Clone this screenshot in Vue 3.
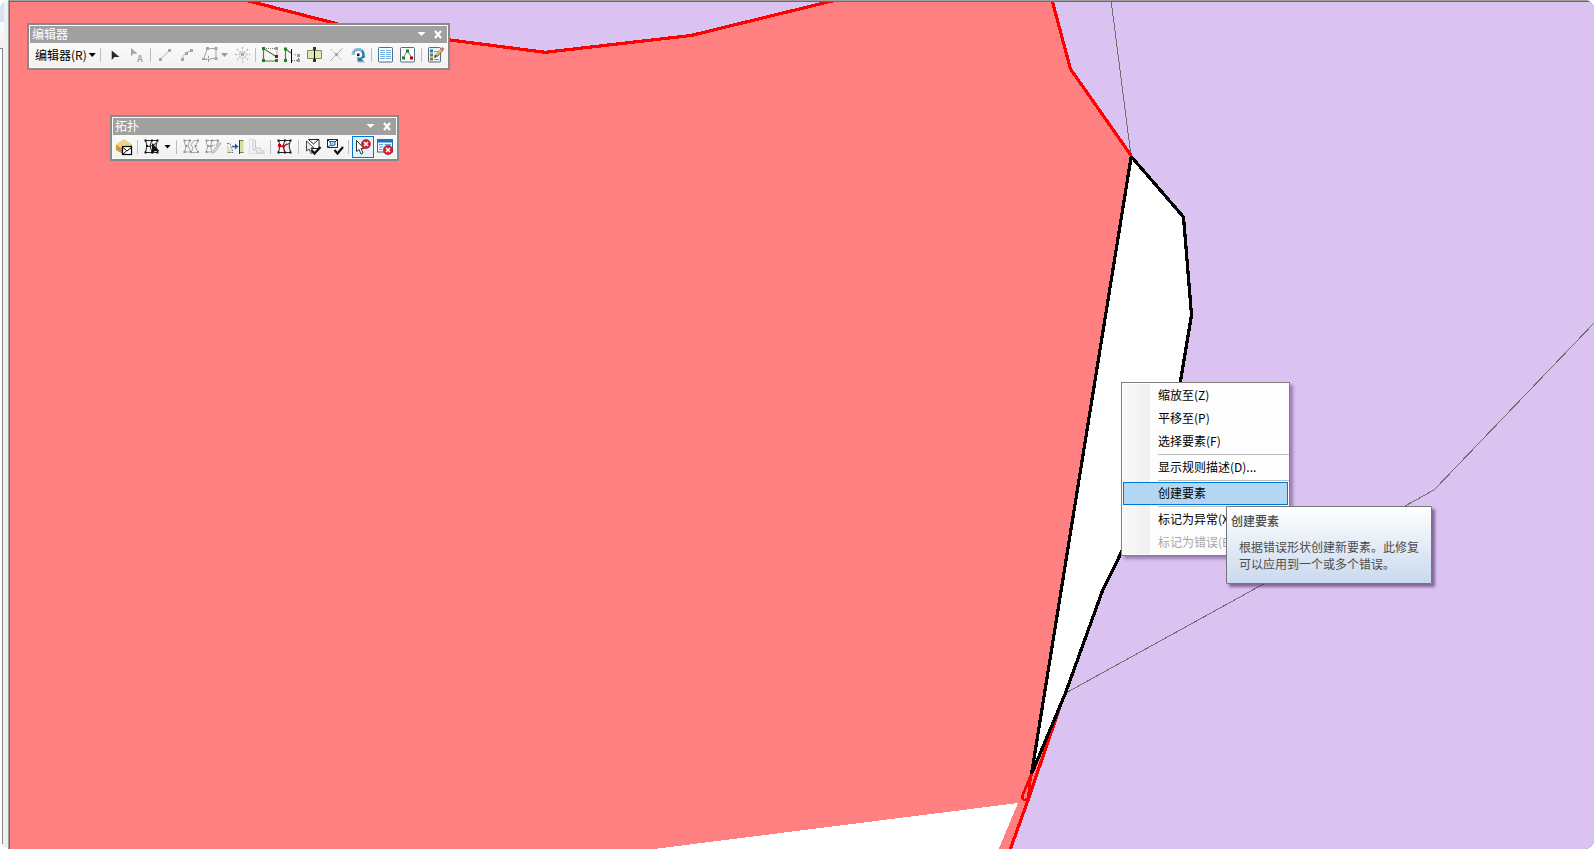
<template>
    <div class="app-window">
        <div class="side-strip">
            <div class="side-top"></div>
            <div class="side-middle"></div>
            <div class="side-panel"></div>
        </div>

        <main class="map-view">
            <!-- 地图图层 -->
            <svg class="map-canvas" viewBox="10 2 1584 847" shape-rendering="crispEdges">
                <rect x="10" y="2" width="1584" height="847" fill="#dac2f1" />
                <polygon class="land" :points="landPoints" />
                <polygon class="blank" points="650,849.5 1018,803 998.5,849.5" />
                <polyline class="boundary" points="1111,0 1131,156" />
                <polyline class="boundary" points="1596,321 1434,490 1064,694" />
                <polyline class="edge" points="243,-0.5 365,31 450,40 545,52.3 691,35.5 836,0" />
                <polyline class="edge" points="1052,0 1070.5,69 1131.5,156" />
                <polyline class="edge" points="1064,695 1028,800 1010,850" />
                <polyline class="edge thin" points="1032,772 1022,797 1024,800 1028,799 1030,782 1032,772" />
                <polygon class="gap-shape" :points="gapPoints" />
            </svg>

            <!-- 编辑器工具条 -->
            <section class="toolbar editor-bar">
                <header class="toolbar-title">
                    <span class="title-text">编辑器</span>
                    <svg class="title-icons" width="32" height="17" viewBox="0 0 32 17">
                        <path d="M2.5 6h8l-4 4z" fill="#fff" />
                        <path d="M20 5l6 7M26 5l-6 7" stroke="#fff" stroke-width="2.2" />
                    </svg>
                </header>
                <div class="toolbar-body">
                    <button class="menu-button"><span class="menu-label">编辑器(R)</span><i class="caret"></i></button>
                    <i class="divider"></i>
                    <svg class="tool" viewBox="0 0 22 22">
                        <path d="M7.7 6.5v9.5l2.8-3h5z" fill="#222a30" />
                    </svg>
                    <svg class="tool" viewBox="0 0 22 22">
                        <path d="M5 4v8.500l2.400-2.800H11.500z" fill="#a6a6a6" />
                        <text x="11" y="18" font-size="9" font-weight="bold" fill="#a6a6a6">A</text>
                    </svg>
                    <i class="divider"></i>
                    <svg class="tool" viewBox="0 0 22 22">
                        <path d="M6 15.5L15.5 6.5" stroke="#b4b4b4" />
                        <path d="M5 14h3v3H5zM14 5h3v3h-3z" fill="#a6a6a6" />
                    </svg>
                    <svg class="tool" viewBox="0 0 22 22">
                        <path d="M6.5 15.5Q6.5 9 15 6.5" fill="none" stroke="#b4b4b4" />
                        <path d="M5 14h3v3H5zM9 8h3v3H9zM14 5h3v3h-3z" fill="#a6a6a6" />
                    </svg>
                    <svg class="tool" viewBox="0 0 22 22">
                        <path d="M13 14.5h5v-10H9.5l-4 10.5h3" fill="none" stroke="#a6a6a6" />
                        <path d="M8 3h3v3H8zM16.5 3h3v3h-3zM16.5 13h3v3h-3zM4 14h3v2H4z" fill="#a6a6a6" />
                        <path d="M10.5 12v7M7 15.5h7" stroke="#999" stroke-dasharray="2.5 1" />
                    </svg>
                    <i class="caret after-tool muted"></i>
                    <svg class="tool" viewBox="0 0 22 22" stroke="#bbb" stroke-width="1.5">
                        <path d="M11.5 3v15.5M4 10.500h15M6 5l11 11M17 5L6 16" stroke-dasharray="2 1.5" />
                        <path d="M10 9h3v3h-3z" fill="#aaa" stroke="none" />
                    </svg>
                    <i class="divider"></i>
                    <svg class="tool" viewBox="0 0 22 22">
                        <path d="M5 4.5h13v7" fill="none" stroke="#777" stroke-dasharray="1 1" />
                        <path d="M17 12.5L4.5 4.5v12.5h13" fill="none" stroke="#55803a" stroke-width="1.2" />
                        <path d="M3 3h3v3H3zM3 15h3v3H3zM16 15h3v3h-3z" fill="#118a11" />
                        <path d="M16 3h3v3h-3z" fill="#999" />
                        <path d="M16 11h3v3h-3z" fill="#b30000" />
                    </svg>
                    <svg class="tool" viewBox="0 0 22 22">
                        <path d="M17.5 17v-5.5l-5-1M11 16.5h6" fill="none" stroke="#777" stroke-dasharray="1 1" />
                        <path d="M10 9L4.5 5v12" fill="none" stroke="#55803a" stroke-width="1.2" />
                        <path d="M3 3.5h3v3H3zM3 15h3v3H3z" fill="#118a11" />
                        <path d="M16 10h3v3h-3zM16 15h3v3h-3z" fill="#999" />
                        <path d="M10.5 5v14" stroke="#000" />
                    </svg>
                    <svg class="tool" viewBox="0 0 22 22">
                        <path d="M4.5 6.5h14v8h-14z" fill="#dfe9ae" stroke="#7d8c5a" />
                        <path d="M11.5 3v15" stroke="#000" />
                        <path d="M10 3h3v3h-3zM10 15h3v3h-3z" fill="#333" />
                    </svg>
                    <svg class="tool" viewBox="0 0 22 22">
                        <path d="M5 17L17.5 4.5" stroke="#aaa" />
                        <path d="M5.5 5l11 11" stroke="#b5b5b5" stroke-dasharray="3 1" />
                        <path d="M10 9h3v3h-3z" fill="#a6a6a6" />
                    </svg>
                    <svg class="tool" viewBox="0 0 22 22">
                        <path d="M6 10.5C6 4 16.5 3 16.5 11v3" fill="none" stroke="#2b7fae" stroke-width="2.6" />
                        <path d="M5.5 10.500C6 4.500 12 3.500 15 6.500" fill="none" stroke="#8fc5e3" stroke-width="1.8" />
                        <path d="M10.5 12.5v5h7z" fill="#2577a5" />
                        <path d="M12.500 16l4.500-4" stroke="#2577a5" stroke-width="2" />
                        <path d="M10 9.5h2.5V12H10z" fill="#222" />
                        <path d="M11 18.5h7" stroke="#ccc" />
                    </svg>
                    <i class="divider"></i>
                    <svg class="tool" viewBox="0 0 22 22">
                        <rect x="3.5" y="3.5" width="14" height="14.5" rx="1" fill="#fff" stroke="#536b80" />
                        <path d="M5 6.5h5M11 6.5h5M5 8.5h5M11 8.5h5M5 10.5h5M11 10.5h5M5 12.5h5M11 12.5h5M5 14.5h5M11 14.5h5" stroke="#73afe3" />
                    </svg>
                    <svg class="tool" viewBox="0 0 22 22">
                        <rect x="3.5" y="3.5" width="14" height="14.5" rx="1" fill="#fff" stroke="#536b80" />
                        <path d="M6 14l4.5-7 4.5 7" fill="none" stroke="#777" />
                        <path d="M9 5.5h3v3H9zM5 12.5h3v3H5z" fill="#118a11" />
                        <path d="M13 12.5h3v3h-3z" fill="#b3000f" />
                    </svg>
                    <i class="divider"></i>
                    <svg class="tool" viewBox="0 0 22 22">
                        <rect x="3.5" y="3.5" width="12" height="14.5" rx="1" fill="#e7f4fc" stroke="#536b80" />
                        <path d="M9 7.5h5M9 11.5h5M9 15.5h5" stroke="#68a4d0" />
                        <path d="M5 5.5h3v3H5z" fill="#3f75a2" />
                        <path d="M5 9.5h3v3H5z" fill="#5f8b43" />
                        <path d="M5 13.5h3v3H5z" fill="#a5712c" />
                        <path d="M11 12l6.5-6.5" stroke="#8a6a3a" stroke-width="3" />
                        <path d="M11 11.500l6-6" stroke="#f0bd6a" stroke-width="1.8" />
                        <path d="M16.500 6L18.5 4" stroke="#d9707a" stroke-width="3" />
                        <path d="M9.5 13.500l2-2" stroke="#333" stroke-width="1.5" />
                    </svg>
                </div>
            </section>

            <!-- 拓扑工具条 -->
            <section class="toolbar topology-bar">
                <header class="toolbar-title">
                    <span class="title-text">拓扑</span>
                    <svg class="title-icons" width="32" height="17" viewBox="0 0 32 17">
                        <path d="M2.5 6h8l-4 4z" fill="#fff" />
                        <path d="M20 5l6 7M26 5l-6 7" stroke="#fff" stroke-width="2.2" />
                    </svg>
                </header>
                <div class="toolbar-body">
                    <svg class="tool" viewBox="0 0 22 22">
                        <path d="M3 8.500v5l8 4.500 8-4.500v-5z" fill="#dca040" />
                        <path d="M3 8.500L11 3l8 5.500-8 5z" fill="#f3cf83" />
                        <path d="M3 11l8 5M3 13.500l8 4.500" stroke="#b37c28" stroke-width=".8" />
                        <rect x="9.5" y="10.5" width="9" height="8" fill="#fff" stroke="#000" stroke-width="1.2" />
                        <path d="M10 11.5l4 3.5 4.5-3.5M10 18l3.500-3" fill="none" stroke="#000" />
                    </svg>
                    <i class="divider"></i>
                    <svg class="tool" viewBox="0 0 22 22">
                        <path :d="networkPath" fill="none" stroke="#222" />
                        <path :d="networkNodes" fill="#111" />
                        <path d="M11 7v11l2.800-3 4.700.3z" fill="#111" />
                    </svg>
                    <i class="caret after-tool"></i>
                    <i class="divider"></i>
                    <svg class="tool" viewBox="0 0 22 22">
                        <path d="M4.500 4v3l1.500 3-1.500 6M4 4.500h6l-2 5 3 6.500H4M6 10h3M18 4.500h-4l-3 4 2 4-2 4h7l-2.500-6z" fill="none" stroke="#a6a6a6" />
                        <path d="M3.500 3.500h2v2h-2zM9 3.500h2v2H9zM17 3.500h2v2h-2zM3.500 15h2v2h-2zM10 15h2v2h-2zM17 15h2v2h-2zM5 9h2v2H5zM14.500 9h2v2h-2z" fill="#949494" />
                    </svg>
                    <svg class="tool" viewBox="0 0 22 22">
                        <path d="M4.500 4v4l1.500 2-2 6M4 4.500h12l-1.500 5M10 4.500L8.500 10l-3 .5M9 10l4-1M8.500 10l1.500 6H4" fill="none" stroke="#a6a6a6" />
                        <path d="M10.500 17.500l1.500-3.500 5.500-7.500 1.500 1-5.500 8z" fill="#e3e3e3" stroke="#a6a6a6" stroke-width=".9" />
                        <path d="M3.500 3.500h2v2h-2zM9 3.500h2v2H9zM15 3.500h2v2h-2zM3.500 15h2v2h-2zM5 9h2v2H5zM8 9h2v2H8z" fill="#949494" />
                    </svg>
                    <svg class="tool" viewBox="0 0 22 22">
                        <path d="M3 7l5 10H3z" fill="#d6e5b8" />
                        <path d="M3 7.500h3l3 9H3" fill="none" stroke="#777" stroke-dasharray="2 1" />
                        <path d="M16 4h3.5v13H16z" fill="#cfe0a2" />
                        <path d="M16 4.500h3.500M16 16.500h3.500" stroke="#6f7f50" />
                        <path d="M15.5 4v14" stroke="#b30010" />
                        <path d="M8 10.5h4" stroke="#135fa8" stroke-width="1.5" />
                        <path d="M11 7.5l3.5 3-3.5 3z" fill="#135fa8" />
                    </svg>
                    <svg class="tool" viewBox="0 0 22 22" fill="none">
                        <path d="M8.500 3.500h-5v14h15" stroke="#c4c4c4" stroke-dasharray="1 1" />
                        <path d="M7 4v10h4v3h8M9.500 4v8h5v3h4" stroke="#c4c4c4" />
                    </svg>
                    <i class="divider"></i>
                    <svg class="tool" viewBox="0 0 22 22">
                        <path :d="networkPath" fill="none" stroke="#222" />
                        <path :d="networkNodes" fill="#111" />
                        <path d="M5 9.5l4 1 4-3M9 10.5l1.500 5.5" fill="none" stroke="#e00018" />
                        <path d="M4 8h3v3H4zM8.500 9h2.500v2.500H8.500z" fill="#d00018" />
                    </svg>
                    <i class="divider"></i>
                    <svg class="tool" viewBox="0 0 22 22">
                        <path d="M6.5 3.500h10.5v9H8M6.5 3.500l5 4.500 5-4.500" fill="#fff" stroke="#222" />
                        <path d="M4.5 5v10l2.5-2 2 4.5 2-1L9 12h3z" fill="#eee" stroke="#333" stroke-width=".9" />
                        <path d="M9.5 14l3 3.5 6-6.500" fill="none" stroke="#111" stroke-width="2.3" />
                    </svg>
                    <svg class="tool" viewBox="0 0 22 22">
                        <path d="M3.5 3.5h10v8h-10zM3.5 3.5l3 3M13.5 3.5l-3 3M3.5 11.5l3-2.500" fill="#fff" stroke="#222" />
                        <path d="M6 5.5h5v3.5l-4 1z" fill="#a7ccf0" stroke="#2267b5" />
                        <path d="M10.5 14l3 3.5 5.5-6.5" fill="none" stroke="#111" stroke-width="2.2" />
                    </svg>
                    <i class="divider"></i>
                    <svg class="tool active" viewBox="0 0 22 22">
                        <path d="M4.5 4.5v11l2.5-2 2 4.5 2-1-2-4.500h3z" fill="#fff" stroke="#333" />
                        <circle cx="14" cy="8" r="4.5" fill="#d3202a" stroke="#a5151d" stroke-width=".6" />
                        <path d="M12 6l4 4M16 6l-4 4" stroke="#fff" stroke-width="1.6" />
                    </svg>
                    <svg class="tool" viewBox="0 0 22 22">
                        <rect x="3.5" y="3.5" width="15" height="12.5" fill="#f4faff" stroke="#376a9e" />
                        <path d="M3 3h16v3.500H3z" fill="#1d70c1" />
                        <path d="M5 8.5h4M10.5 8.5H17M5 11h4M5 13.5h3" stroke="#6aa5d9" />
                        <circle cx="14" cy="14" r="4.7" fill="#d3202a" stroke="#a5151d" stroke-width=".6" />
                        <path d="M12 12l4 4M16 12l-4 4" stroke="#fff" stroke-width="1.6" />
                    </svg>
                </div>
            </section>

            <!-- 错误右键菜单 -->
            <ul class="context-menu">
                <li v-for="(item, i) in menuItems" :key="i"
                    :class="item.separator ? 'menu-separator' : ['menu-item', { selected: item.selected, disabled: item.disabled }]">
                    {{ item.label }}
                </li>
            </ul>

            <div class="tooltip">
                <div class="tooltip-title">创建要素</div>
                <p>根据错误形状创建新要素。此修复<br>可以应用到一个或多个错误。</p>
            </div>
        </main>
    </div>
</template>

<script setup>
import { ref } from 'vue'

// 地图要素坐标
const landPoints = '10,2 247,2 365,31 450,40 545,52 691,35.5 833,2 1052,2 1070.5,69 1131,156 1100,600 1065,694 1010,850 10,850'
const gapPoints = '1131.2,156.5 1183.5,217 1191.5,315 1180,384 1150,490 1121,553 1102,592 1065.5,693 1031.5,774'

// 拓扑网络图标
const networkPath = 'M4 4.5h13M4 16.5h13M4.5 4l1.5 6-1.5 6M16.5 4l-1.5 6 1.5 6M11 4l-2 6 2 6M5 10l4 .5 6-3'
const networkNodes = 'M3.5 3.5h2v2h-2zM10 3.5h2v2h-2zM15.5 3.5h2v2h-2zM3.5 15.5h2v2h-2zM10 15.5h2v2h-2zM15.5 15.5h2v2h-2zM5 9h2v2H5z'

const menuItems = ref([
    { label: '缩放至(Z)' },
    { label: '平移至(P)' },
    { label: '选择要素(F)' },
    { separator: true },
    { label: '显示规则描述(D)...' },
    { separator: true },
    { label: '创建要素', selected: true },
    { separator: true },
    { label: '标记为异常(X)' },
    { label: '标记为错误(E)', disabled: true }
])
</script>

<style>
body {
    background: #fff;
    overflow: hidden;
}
</style>

<style scoped>
.app-window {
    display: flex;
    box-sizing: border-box;
    width: 1594px;
    height: 849px;
    overflow: hidden;
    border-radius: 9px;
    background: #f0f0f0;
    font-family: "Noto Sans CJK SC", "Noto Sans", sans-serif;
    font-size: 12px;
    color: #000;
}

.side-strip {
    display: flex;
    flex-direction: column;
    width: 8px;
    flex: none;
}

.side-top {
    width: 4px;
    height: 22px;
    background: #d6e3f2;
}

.side-middle {
    width: 4px;
    height: 26px;
    background: linear-gradient(#fcfcfc, #efefef);
}

.side-panel {
    box-sizing: border-box;
    width: 3px;
    height: 796px;
    background: #fff;
    border-top: 1px solid #828790;
    border-right: 1px solid #828790;
}

.map-view {
    position: relative;
    box-sizing: border-box;
    flex: 1;
    border-top: 1px solid #a0a0a0;
    border-left: 1px solid #a0a0a0;
    background: #696969;
    padding: 1px 0 0 1px;
}

.map-canvas {
    display: block;
    width: 1584px;
    height: 847px;
}

.land {
    fill: #ff8080;
}

.blank {
    fill: #fff;
}

.boundary {
    fill: none;
    stroke: #6e6e6e;
    stroke-width: 1;
}

.edge {
    fill: none;
    stroke: #f00;
    stroke-width: 3.2;
}

.edge.thin {
    stroke-width: 2.5;
}

.gap-shape {
    fill: #fff;
    stroke: #000;
    stroke-width: 3.2;
    stroke-linejoin: bevel;
}

/* 浮动工具条 */
.toolbar {
    position: absolute;
    box-sizing: border-box;
    border: 2px solid #8a8888;
    background: #fafafa;
    padding: 1px;
}

.editor-bar {
    left: 18px;
    top: 22px;
    width: 423px;
    height: 47px;
}

.topology-bar {
    left: 101px;
    top: 114px;
    width: 289px;
    height: 46px;
}

.toolbar-title {
    display: flex;
    align-items: center;
    justify-content: space-between;
    height: 17px;
    background: #a0a0a0;
    color: #fff;
    line-height: 16px;
}

.title-text {
    padding: 0 0 1px 2px;
}

.toolbar-body {
    display: flex;
    align-items: center;
    height: 24px;
    background: linear-gradient(#fafafa, #f1f1f1);
}

.topology-bar .toolbar-body {
    height: 23px;
}

.menu-button {
    display: flex;
    align-items: center;
    box-sizing: border-box;
    width: 68px;
    height: 22px;
    padding: 0 0 0 5px;
    border: none;
    background: none;
    font: inherit;
    color: #000;
    white-space: nowrap;
}

.menu-label {
    padding-bottom: 2px;
}

.caret {
    flex: none;
    width: 7px;
    height: 4px;
    margin-left: 2px;
    background: #000;
    clip-path: polygon(0 0, 100% 0, 50% 100%);
}

.caret.after-tool {
    margin: 0 3px 0 1px;
}

.caret.muted {
    background: #999;
}

.divider {
    flex: none;
    width: 1px;
    height: 14px;
    margin: 0 3px 0 2px;
    background: #bdbdbd;
}

.tool {
    flex: none;
    box-sizing: border-box;
    width: 22px;
    height: 22px;
}

.tool.active {
    background: #e5f1fb;
    outline: 1px solid #0078d7;
    outline-offset: -1px;
}

/* 右键菜单 */
.context-menu {
    position: absolute;
    left: 1112px;
    top: 381px;
    box-sizing: border-box;
    width: 169px;
    height: 174px;
    margin: 0;
    padding: 1px;
    list-style: none;
    border: 1px solid #808080;
    background: linear-gradient(90deg, #f8f8f8, #f0f0f0) 1px 1px / 27px 170px no-repeat #fdfdfd;
    box-shadow: 3px 3px 3px rgba(60, 30, 80, 0.4);
}

.menu-item {
    box-sizing: border-box;
    height: 23px;
    padding-left: 34px;
    border: 1px solid transparent;
    line-height: 19px;
    white-space: nowrap;
}

.menu-item.selected {
    border-color: #0078d7;
    background: #b3d7f3;
}

.menu-item.disabled {
    color: #a8a8a8;
}

.menu-separator {
    height: 1px;
    margin: 1px -1px 1px 35px;
    background: #bdbdbd;
}

.tooltip {
    position: absolute;
    left: 1217px;
    top: 505px;
    box-sizing: border-box;
    width: 206px;
    height: 78px;
    padding: 5px 4px;
    border: 1px solid #767676;
    border-radius: 1px;
    background: linear-gradient(#fff, #c9d9ee);
    box-shadow: 3px 3px 3px rgba(60, 30, 80, 0.55);
    color: #4c4c4c;
}

.tooltip-title {
    height: 18px;
    line-height: 18px;
    font-weight: 500;
}

.tooltip p {
    margin: 8px 0 0 8px;
    line-height: 17px;
    white-space: nowrap;
}
</style>
